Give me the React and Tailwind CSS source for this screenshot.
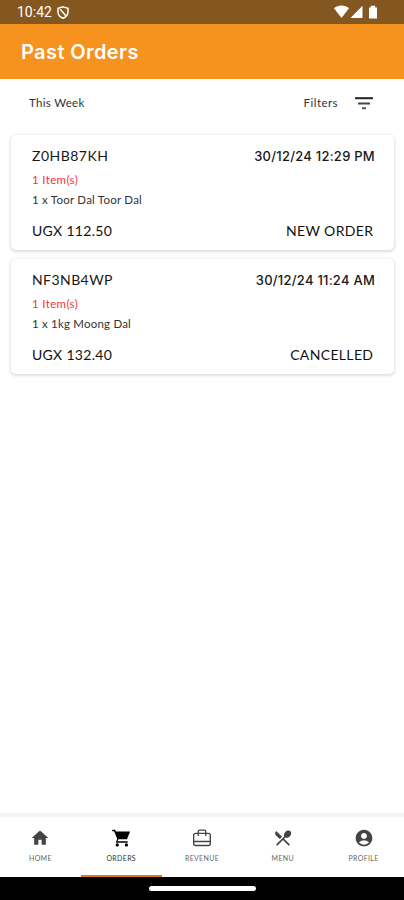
import { MdAccountCircle, MdHome, MdRestaurantMenu } from "react-icons/md";

const orders = [
  {
    id: "Z0HB87KH", idCls: "tracking-[0.48px]",
    date: "30/12/24 12:29 PM", dateCls: "tracking-[0.25px]",
    item: "1 x Toor Dal Toor Dal", itemCls: "tracking-[0.23px]",
    total: "UGX 112.50", status: "NEW ORDER", statusCls: "tracking-[0.35px] -mr-[0.35px]",
  },
  {
    id: "NF3NB4WP", idCls: "tracking-[0.43px]",
    date: "30/12/24 11:24 AM", dateCls: "tracking-[0.25px]",
    item: "1 x 1kg Moong Dal", itemCls: "tracking-[0.2px]",
    total: "UGX 132.40", status: "CANCELLED", statusCls: "tracking-[0.35px] -mr-[0.35px]",
  },
];

function CartIcon({ className }) {
  return (
    <svg className={className} viewBox="0 0 24 24" fill="currentColor">
      <path d="M1.5 2h3.4l1 2.2h17l-3.7 9.2H8.7l-.9 2.4H20v1.8H5.7l1.7-4.6L3.7 4H1.5Z" />
      <circle cx="7.5" cy="20.3" r="2" />
      <circle cx="18.5" cy="20.3" r="2" />
    </svg>
  );
}

function CaseIcon({ className }) {
  return (
    <svg className={className} viewBox="0 0 24 24" fill="none" stroke="currentColor" strokeWidth="1.6">
      <rect x="2" y="6.5" width="20" height="14.5" rx="2.5" />
      <path d="M7.5 9.5V4.3Q7.5 2.5 9.3 2.5h5.4q1.8 0 1.8 1.8v5.2M2 16.2h20" />
    </svg>
  );
}

const tabs = [
  { label: "HOME", Icon: MdHome },
  { label: "ORDERS", Icon: CartIcon, active: true },
  { label: "REVENUE", Icon: CaseIcon },
  { label: "MENU", Icon: MdRestaurantMenu },
  { label: "PROFILE", Icon: MdAccountCircle },
];

function StatusBar() {
  return (
    <div className="flex h-6 shrink-0 items-center bg-[#83571f] pl-[17px] pr-[26px] text-white">
      <span className="font-['Roboto',sans-serif] text-[14px] leading-6">10:42</span>
      <svg className="ml-[5px] h-[13px] w-[12px]" viewBox="0 0 12 13" fill="none" stroke="currentColor" strokeWidth="1.5">
        <path d="M6 .9 11 2.4V6c0 3-2 5-5 6.2C3 11 1 9 1 6V2.4Z" />
        <path d="M3.2 3.2 8.8 9.8" />
      </svg>
      <svg className="ml-auto h-[14px] w-[44px]" viewBox="0 0 44 14" fill="currentColor">
        <path d="M0 3.3C4-.3 11-.3 15 3.3L7.5 13Z" />
        <path d="M28.5.8V13H16.5Z" />
        <path d="M35 2.5h1.8V.8h4.4v1.7H43v11h-8Z" />
      </svg>
    </div>
  );
}

function OrderCard({ order }) {
  return (
    <article className="flex h-[115px] flex-col rounded-[5px] bg-white pl-[21px] pr-[19px] pt-[11px] shadow-[0_1px_3px_1px_rgba(0,0,0,0.13)]">
      <div className="flex h-5 items-center justify-between text-[14px] leading-[18px] text-[#181818]">
        <span className={order.idCls}>{order.id}</span>
        <span className={`-mt-px font-['Inter',sans-serif] text-[13px] font-medium ${order.dateCls}`}>{order.date}</span>
      </div>
      <div className="mt-[5px] h-[18px] text-[11.5px] leading-[18px] tracking-[0.35px] text-[#f5333b]">1 Item(s)</div>
      <div className={`mt-[2px] h-[18px] text-[11.5px] leading-[18px] text-[#333] ${order.itemCls}`}>{order.item}</div>
      <div className="mt-[11px] flex h-5 items-center justify-between pr-[2px] text-[14px] text-[#111]">
        <span className="tracking-[0.3px]">{order.total}</span>
        <span className={order.statusCls}>{order.status}</span>
      </div>
    </article>
  );
}

export default function App() {
  return (
    <div className="flex h-[900px] w-[404px] flex-col overflow-hidden bg-white font-['Lato',sans-serif]">
      <StatusBar />
      <header className="flex h-[55px] shrink-0 items-center bg-[#f6921e] pl-[21px] text-white">
        <h1 className="mt-px font-['Inter',sans-serif] text-[20px] font-semibold leading-6 tracking-[0.4px]">Past Orders</h1>
      </header>
      <div className="flex h-12 shrink-0 items-center pl-[29px] pr-[31px] text-[11.5px] text-[#333]">
        <span className="tracking-[0.3px]">This Week</span>
        <span className="ml-auto tracking-[0.45px]">Filters</span>
        <svg className="ml-[17px] h-[13px] w-[18px]" viewBox="0 0 18 13">
          <path d="M0 1.2h18" stroke="#222" strokeWidth="2" />
          <path d="M3 6.5h12" stroke="#444" strokeWidth="2" />
          <path d="M7 11.2h4" stroke="#555" strokeWidth="2" />
        </svg>
      </div>
      <main className="flex flex-1 flex-col gap-[9px] pl-[11px] pt-2 pr-[10px]">
        {orders.map((order) => <OrderCard key={order.id} order={order} />)}
      </main>
      <nav className="flex h-[64px] shrink-0 border-t-4 border-[#f5f5f5] bg-white">
        {tabs.map(({ label, Icon, active }) => (
          <div
            key={label}
            className={`flex flex-1 flex-col items-center border-b-2 pt-[11px] ${active ? "border-[#d97a25] text-black" : "border-b-white text-[#444]"}`}
          >
            <Icon className="size-5" />
            <span className={`mt-[5px] text-[7px] leading-[10px] tracking-[0.35px] ${active ? "text-[#333]" : "text-[#666]"}`}>{label}</span>
          </div>
        ))}
      </nav>
      <footer className="flex h-[23px] shrink-0 justify-center bg-black pt-[9px]">
        <div className="h-[5px] w-[107px] rounded-full bg-white" />
      </footer>
    </div>
  );
}
